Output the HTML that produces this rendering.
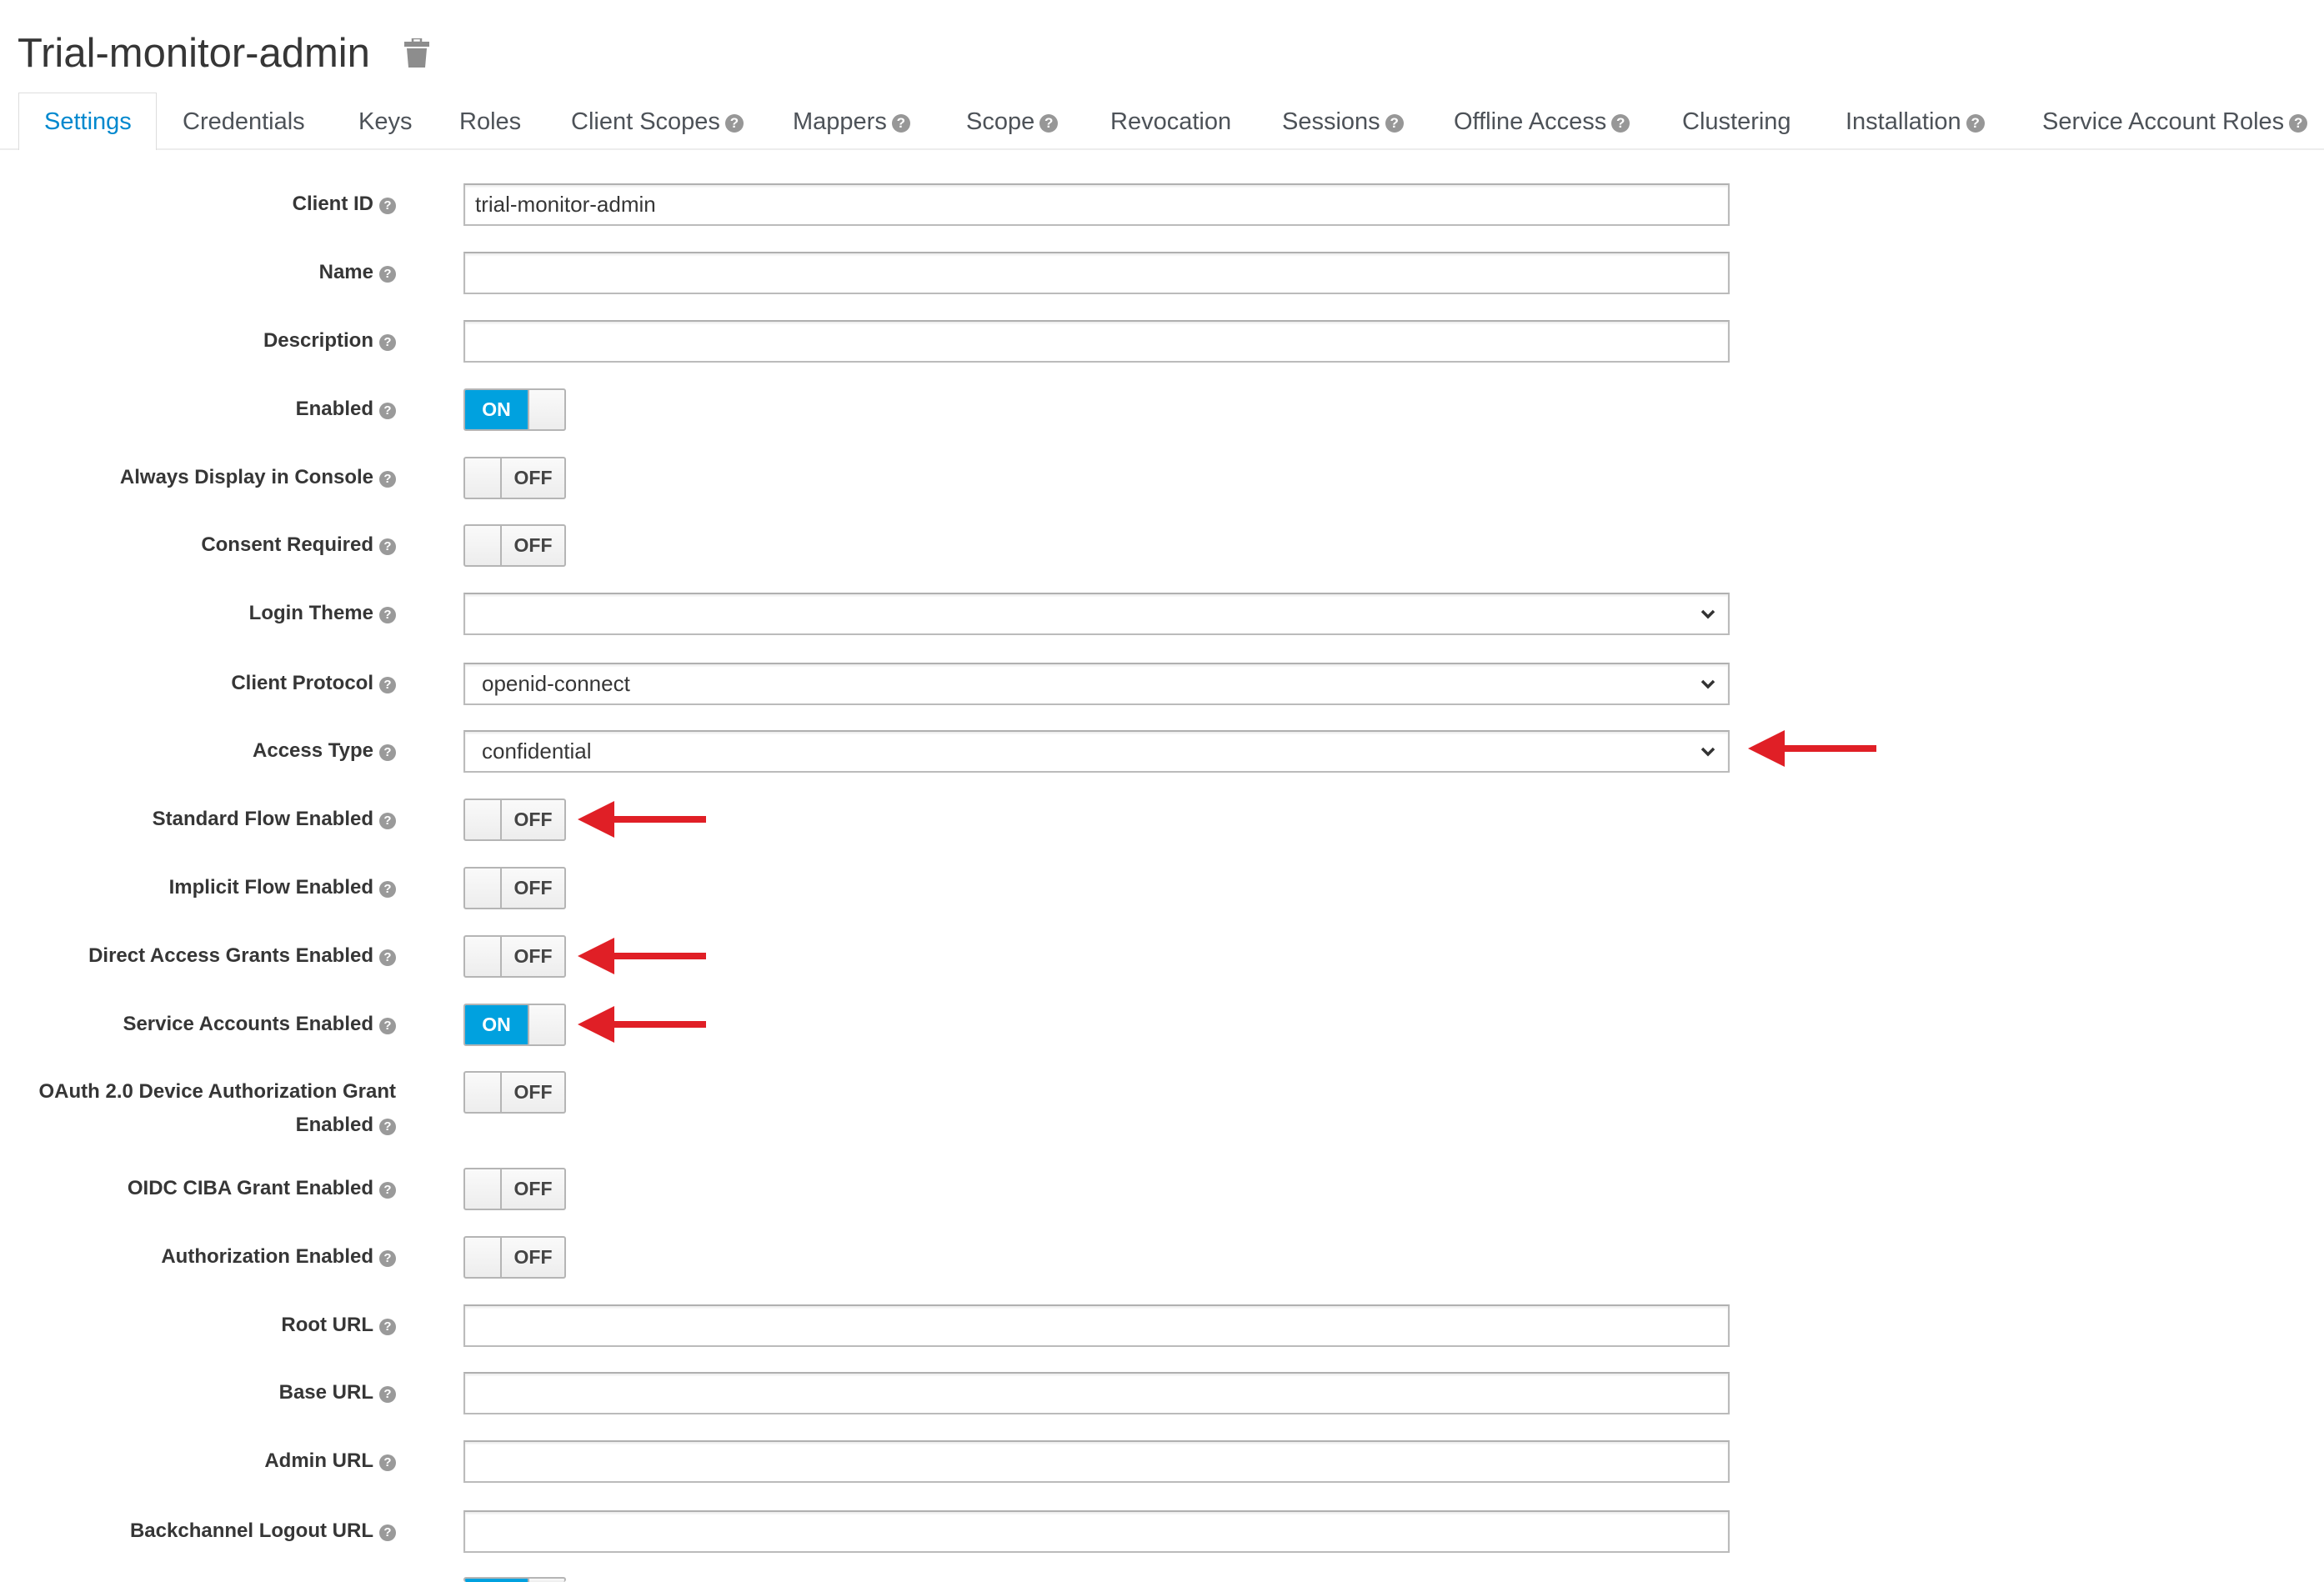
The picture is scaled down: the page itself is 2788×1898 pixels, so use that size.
<!DOCTYPE html>
<html style="overflow:hidden;width:2788px;height:1898px"><head><meta charset="utf-8"><style>
html,body{margin:0;width:2788px;height:1898px;overflow:hidden}
body{background:#fff;position:relative;font-family:"Liberation Sans",Arial,sans-serif;}
.abs{position:absolute}
.title{left:21px;top:34px;font-size:49px;color:#363636;line-height:60px;white-space:nowrap}
.tabbar{left:0;top:178px;width:2788px;height:2px;background:#ededed}
.tabact{left:22px;top:111px;width:166px;height:69px;background:#fff;border:1px solid #ddd;border-bottom:none;box-sizing:border-box}
.tab{top:128px;font-size:29px;color:#4d5258;line-height:36px;white-space:nowrap}
.hq{display:inline-block;width:22px;height:22px;border-radius:50%;background:#979797;color:#fff;font-weight:bold;font-size:17px;line-height:22px;text-align:center;vertical-align:2px;margin-left:6px}
.lbl{right:2313px;font-size:24px;font-weight:bold;color:#363636;white-space:nowrap;line-height:30px;text-align:right}
.hs{display:inline-block;width:20px;height:20px;border-radius:50%;background:#9a9a9a;color:#fff;font-weight:bold;font-size:15px;line-height:20px;text-align:center;vertical-align:1px;margin-left:7px}
.inp{left:556px;width:1519px;height:51px;border:2px solid #bbb;border-top-color:#b0b0b0;box-sizing:border-box;background:#fff;box-shadow:inset 0 2px 2px rgba(0,0,0,.08);font-size:26px;color:#363636;line-height:47px;padding-left:12px}
.sel{padding-left:20px}
.chev{position:absolute;right:14px;top:14px;width:20px;height:20px}
.tg{left:556px;width:123px;height:51px;border:2px solid #b5b5b5;border-radius:3px;box-sizing:border-box;background:linear-gradient(#fafafa,#ededed);overflow:hidden}
.tg .on{position:absolute;left:0;top:0;width:77px;height:100%;background:#00a1df;color:#fff;font-weight:bold;font-size:23px;text-align:center;line-height:47px;border-right:2px solid #b5b5b5;box-sizing:border-box}
.tg .h{position:absolute;left:0;top:0;width:44px;height:100%;border-right:2px solid #b5b5b5;box-sizing:border-box}
.tg .off{position:absolute;left:44px;right:0;top:0;height:100%;color:#444;font-weight:bold;font-size:23px;text-align:center;line-height:47px}
</style></head><body>
<div class="abs title">Trial-monitor-admin</div>
<svg class="abs" style="left:484px;top:46px" width="32" height="36" viewBox="0 0 32 36"><rect x="11" y="0" width="10" height="5" fill="none" stroke="#8d8d8d" stroke-width="2.5"/><rect x="1" y="4" width="30" height="6" fill="#8d8d8d"/><path d="M4 12h24l-2 23H6z" fill="#8d8d8d"/></svg>
<div class="abs tabbar"></div>
<div class="abs tabact"></div>
<div class="abs tab" style="left:53px;color:#0088ce">Settings</div>
<div class="abs tab" style="left:219px">Credentials</div>
<div class="abs tab" style="left:430px">Keys</div>
<div class="abs tab" style="left:551px">Roles</div>
<div class="abs tab" style="left:685px">Client Scopes<span class="hq">?</span></div>
<div class="abs tab" style="left:951px">Mappers<span class="hq">?</span></div>
<div class="abs tab" style="left:1159px">Scope<span class="hq">?</span></div>
<div class="abs tab" style="left:1332px">Revocation</div>
<div class="abs tab" style="left:1538px">Sessions<span class="hq">?</span></div>
<div class="abs tab" style="left:1744px">Offline Access<span class="hq">?</span></div>
<div class="abs tab" style="left:2018px">Clustering</div>
<div class="abs tab" style="left:2214px">Installation<span class="hq">?</span></div>
<div class="abs tab" style="left:2450px">Service Account Roles<span class="hq">?</span></div>

<div class="abs lbl" style="top:230px">Client ID<span class="hs">?</span></div>
<div class="abs lbl" style="top:312px">Name<span class="hs">?</span></div>
<div class="abs lbl" style="top:394px">Description<span class="hs">?</span></div>
<div class="abs lbl" style="top:476px">Enabled<span class="hs">?</span></div>
<div class="abs lbl" style="top:558px">Always Display in Console<span class="hs">?</span></div>
<div class="abs lbl" style="top:639px">Consent Required<span class="hs">?</span></div>
<div class="abs lbl" style="top:721px">Login Theme<span class="hs">?</span></div>
<div class="abs lbl" style="top:805px">Client Protocol<span class="hs">?</span></div>
<div class="abs lbl" style="top:886px">Access Type<span class="hs">?</span></div>
<div class="abs lbl" style="top:968px">Standard Flow Enabled<span class="hs">?</span></div>
<div class="abs lbl" style="top:1050px">Implicit Flow Enabled<span class="hs">?</span></div>
<div class="abs lbl" style="top:1132px">Direct Access Grants Enabled<span class="hs">?</span></div>
<div class="abs lbl" style="top:1214px">Service Accounts Enabled<span class="hs">?</span></div>
<div class="abs lbl" style="top:1295px">OAuth 2.0 Device Authorization Grant</div>
<div class="abs lbl" style="top:1335px">Enabled<span class="hs">?</span></div>
<div class="abs lbl" style="top:1411px">OIDC CIBA Grant Enabled<span class="hs">?</span></div>
<div class="abs lbl" style="top:1493px">Authorization Enabled<span class="hs">?</span></div>
<div class="abs lbl" style="top:1575px">Root URL<span class="hs">?</span></div>
<div class="abs lbl" style="top:1656px">Base URL<span class="hs">?</span></div>
<div class="abs lbl" style="top:1738px">Admin URL<span class="hs">?</span></div>
<div class="abs lbl" style="top:1822px">Backchannel Logout URL<span class="hs">?</span></div>

<div class="abs inp" style="top:220px">trial-monitor-admin</div>
<div class="abs inp" style="top:302px"></div>
<div class="abs inp" style="top:384px"></div>
<div class="abs inp sel" style="top:711px"><svg class="chev" viewBox="0 0 20 20"><path d="M3 6l7 7 7-7" fill="none" stroke="#333" stroke-width="3.5"/></svg></div>
<div class="abs inp sel" style="top:795px">openid-connect<svg class="chev" viewBox="0 0 20 20"><path d="M3 6l7 7 7-7" fill="none" stroke="#333" stroke-width="3.5"/></svg></div>
<div class="abs inp sel" style="top:876px">confidential<svg class="chev" viewBox="0 0 20 20"><path d="M3 6l7 7 7-7" fill="none" stroke="#333" stroke-width="3.5"/></svg></div>
<div class="abs inp" style="top:1565px"></div>
<div class="abs inp" style="top:1646px"></div>
<div class="abs inp" style="top:1728px"></div>
<div class="abs inp" style="top:1812px"></div>

<div class="abs tg" style="top:466px"><div class="on">ON</div></div>
<div class="abs tg" style="top:548px"><div class="h"></div><div class="off">OFF</div></div>
<div class="abs tg" style="top:629px"><div class="h"></div><div class="off">OFF</div></div>
<div class="abs tg" style="top:958px"><div class="h"></div><div class="off">OFF</div></div>
<div class="abs tg" style="top:1040px"><div class="h"></div><div class="off">OFF</div></div>
<div class="abs tg" style="top:1122px"><div class="h"></div><div class="off">OFF</div></div>
<div class="abs tg" style="top:1204px"><div class="on">ON</div></div>
<div class="abs tg" style="top:1285px"><div class="h"></div><div class="off">OFF</div></div>
<div class="abs tg" style="top:1401px"><div class="h"></div><div class="off">OFF</div></div>
<div class="abs tg" style="top:1483px"><div class="h"></div><div class="off">OFF</div></div>
<div class="abs tg" style="top:1892px;height:6px;border-bottom:none"><div class="on"></div></div>

<svg class="abs" style="left:0;top:0" width="2788" height="1898">
<g fill="#e01f26">
<path d="M2097 898L2141 876V894H2251V902H2141V920Z"/>
<path d="M693 983L737 961V979H847V987H737V1005Z"/>
<path d="M693 1147L737 1125V1143H847V1151H737V1169Z"/>
<path d="M693 1229L737 1207V1225H847V1233H737V1251Z"/>
</g></svg>
</body></html>
